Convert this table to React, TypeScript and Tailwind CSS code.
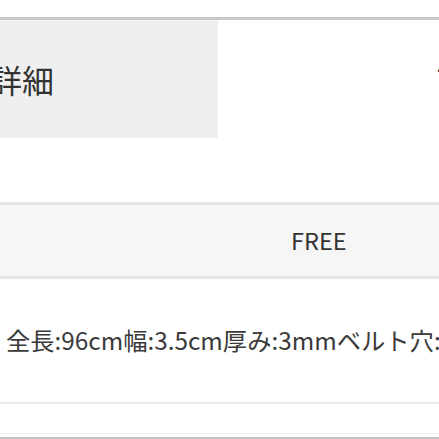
export default function App() {
  const font = { fontFamily: '"Noto Sans CJK JP", "Noto Sans", sans-serif' };
  return (
    <div className="w-[439px] h-[439px] overflow-hidden bg-white text-[#333333]" style={font}>
      <div className="h-[17px]" />
      <div className="h-[3px] bg-[#c8c8c8]" />
      <div className="flex h-[182px]">
        <div className="w-[218px] h-[118px] bg-[#efefef] flex items-center overflow-hidden">
          <span className="ml-[-10px] text-[32px] leading-none whitespace-nowrap">詳細</span>
        </div>
        <div className="flex-1 relative overflow-hidden">
          <span className="absolute left-[218px] top-[38px] text-[31px] leading-none whitespace-nowrap">サイズ</span>
        </div>
      </div>
      <div className="h-[3px] bg-[#e4e4e4]" />
      <div className="h-[71px] bg-[#f6f6f6] flex items-center">
        <span className="ml-[291px] text-[23.5px] leading-none">FREE</span>
      </div>
      <div className="h-[3px] bg-[#e6e6e6]" />
      <div className="h-[123px] flex items-center overflow-hidden">
        <span className="ml-[6px] text-[24.3px] leading-none whitespace-nowrap text-[#3a3a3a]">全長:96cm幅:3.5cm厚み:3mmベルト穴: 5個</span>
      </div>
      <div className="h-[2px] bg-[#ececec]" />
      <div className="h-[29px]" />
      <div className="h-[1px] bg-[#efefef]" />
      <div className="h-[3px]" />
      <div className="h-[2px] bg-[#c4c4c4]" />
    </div>
  );
}
